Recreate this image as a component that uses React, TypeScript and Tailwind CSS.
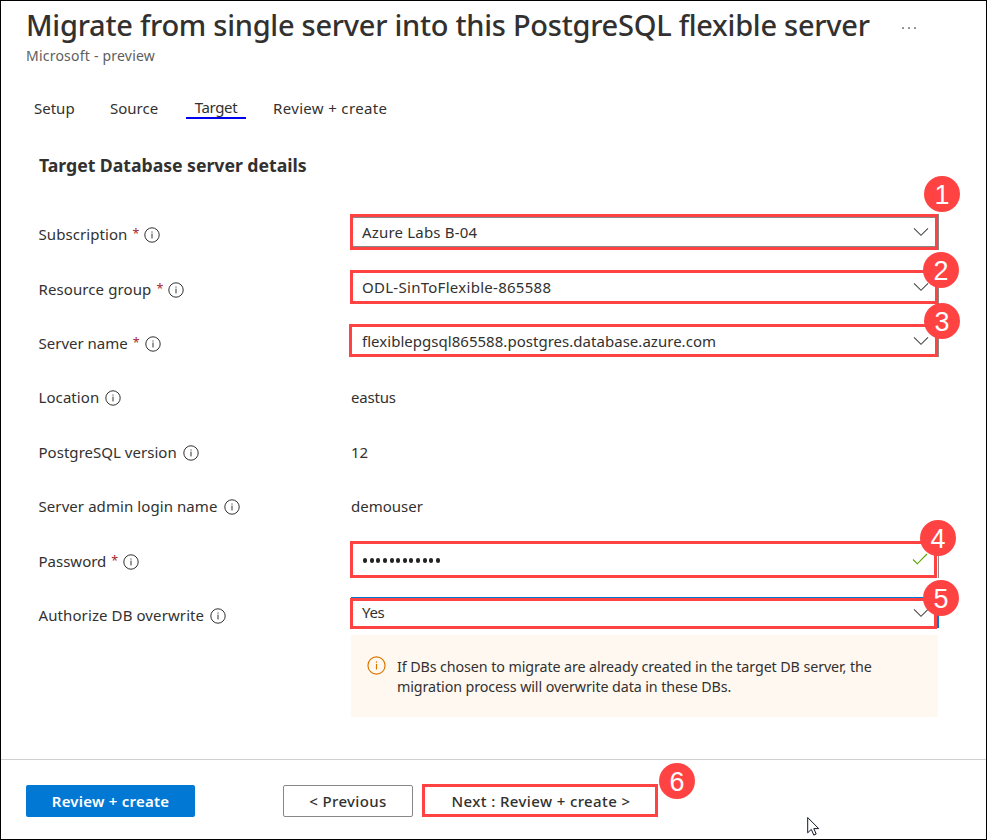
import type { ReactNode } from "react";

function InfoIcon({ className = "size-4" }: { className?: string }) {
  return (
    <svg viewBox="0 0 16 16" className={`shrink-0 ${className}`} fill="none" stroke="currentColor">
      <circle cx="8" cy="8" r="7.2" strokeWidth="1" />
      <path d="M8 6.6V11.4" strokeWidth="1" />
      <path d="M8 4.5V5.6" strokeWidth="1" />
    </svg>
  );
}

function Chevron({ className = "" }: { className?: string }) {
  return (
    <svg viewBox="0 0 16 10" className={`h-2.5 w-4 shrink-0 ${className}`} fill="none" stroke="#4a4948" strokeWidth="1.1">
      <path d="M1 1.3L8 8.3L15 1.3" />
    </svg>
  );
}

function Badge({ n, className }: { n: number; className: string }) {
  return (
    <span
      className={`absolute z-10 flex size-9 items-center justify-center rounded-full bg-[#ff4343] pt-0.5 font-['Liberation_Sans',Arial,sans-serif] text-[27px] leading-none text-white ${className}`}
    >
      {n}
    </span>
  );
}

function Label({ text, required, track = "" }: { text: string; required?: boolean; track?: string }) {
  return (
    <div className="flex h-[54.4px] items-center">
      <span className={track}>{text}</span>
      {required && <span className="ml-[5px] w-1.5 text-[12.5px] text-[#a4262c]">*</span>}
      <InfoIcon className={`mt-0.5 size-4 ${required ? "ml-1.5" : "ml-[6px]"}`} />
    </div>
  );
}

function Field({ className, children }: { className: string; children: ReactNode }) {
  return (
    <div className={`relative flex items-center justify-between border-3 border-[#ff4343] bg-white ${className}`}>
      {children}
    </div>
  );
}

export default function App() {
  return (
    <div className="relative flex h-[840px] w-[987px] flex-col overflow-hidden border border-black bg-white font-['Noto_Sans','Open_Sans',sans-serif] text-[15px] leading-[22px] text-[#323130]">
      <header className="h-[81px] pl-[25px]">
        <div className="flex h-[45px] items-center pt-0.5">
          <h1 className="w-[844px] text-[29px] leading-10 font-medium tracking-[-0.265px] whitespace-nowrap">
            Migrate from single server into this PostgreSQL flexible server
          </h1>
          <svg viewBox="0 0 14 2" className="mt-1.5 ml-8 h-0.5 w-3.5" fill="#323130">
            <circle cx="1" cy="1" r=".85" />
            <circle cx="7" cy="1" r=".85" />
            <circle cx="13" cy="1" r=".85" />
          </svg>
        </div>
        <p className="text-[14px] leading-5 tracking-[0.22px] text-[#605e5c]">Microsoft - preview</p>
      </header>

      <nav className="flex h-[55px] items-start pt-[15px] pl-[33px]">
        <span className="w-[76px]">Setup</span>
        <span className="w-[76px]">Source</span>
        <span className="-mt-px h-[23px] w-[60px] border-b-2 border-[#0000f0] text-center tracking-[-0.35px]">Target</span>
        <span className="ml-[27px] tracking-[0.34px]">Review + create</span>
      </nav>

      <main className="h-[622px] pl-[38px]">
        <h2 className="h-[70px] pt-4 text-[17.7px] leading-6 font-bold tracking-[-0.04px]">Target Database server details</h2>
        <div className="flex">
          <div className="-ml-[0.5px] w-[311.5px]">
            <Label text="Subscription" required track="tracking-[0.07px]" />
            <Label text="Resource group" required track="tracking-[0.1px]" />
            <Label text="Server name" required />
            <Label text="Location" track="tracking-[0.08px]" />
            <Label text="PostgreSQL version" track="tracking-[0.03px]" />
            <Label text="Server admin login name" track="tracking-[0.08px]" />
            <Label text="Password" required />
            <Label text="Authorize DB overwrite" track="tracking-[0.1px]" />
          </div>
          <div className="flex w-[590px] flex-col">
            <Field className="mt-[7px] h-9 w-[588px] shadow-[1px_0_0_#8a8886]">
              <div className="flex h-full w-full items-center justify-between border-y border-[#8a8886] pr-1.5 pl-[9px]">
                <span className="tracking-[0.18px]">Azure Labs B-04</span>
                <Chevron />
              </div>
              <Badge n={1} className="-top-[41px] -right-[25px]" />
            </Field>
            <Field className="mt-5 h-[34px] w-[588px] pr-1.5 pl-[9px] shadow-[1px_0_0_#8a8886]">
              <span className="tracking-[0.28px]">ODL-SinToFlexible-865588</span>
              <Chevron />
              <Badge n={2} className="-top-[21px] -right-6" />
            </Field>
            <Field className="mt-5 -ml-px h-[33px] w-[589px] pr-1.5 pl-2.5 shadow-[1px_0_0_#8a8886]">
              <span className="tracking-[0.03px]">flexiblepgsql865588.postgres.database.azure.com</span>
              <Chevron />
              <Badge n={3} className="-top-6 -right-[25px]" />
            </Field>
            <span className="mt-[29px] ml-px tracking-[-0.2px]">eastus</span>
            <span className="mt-[33px] ml-px">12</span>
            <span className="mt-8 ml-px">demouser</span>
            <Field className="mt-6 h-[37px] w-[587px] pr-1.5 pl-2.5 shadow-[1px_0_0_#ffffff,2px_0_0_#8a8886]">
              <div className="mt-0.5 flex gap-[2.65px]">
                {Array.from({ length: 12 }, (_, i) => (
                  <i key={i} className="h-[4.5px] w-1 rounded-full bg-[#252423]" />
                ))}
              </div>
              <svg viewBox="0 0 16 12" className="mb-0.5 h-3 w-4" fill="none" stroke="#57a300" strokeWidth="1.1">
                <path d="M1 6.5L5.3 10.8L15 1" />
              </svg>
              <Badge n={4} className="-top-6 -right-[22px]" />
            </Field>
            <Field className="mt-5 h-[31px] w-[587px] pr-[5px] pl-[9px] shadow-[1px_-1px_0_#0078d4,2px_-1px_0_#0078d4]">
              <span className="-mt-[3px] tracking-[-0.35px]">Yes</span>
              <Chevron className="mb-0.5" />
              <Badge n={5} className="-top-[21px] -right-[25px]" />
            </Field>
            <div className="mt-1.5 ml-px flex h-[82px] w-[587px] bg-[#fff8f1] pt-[21px] pl-4">
              <InfoIcon className="size-[19px] text-[#db7500]" />
              <p className="mt-px ml-[11px] text-[14.3px] leading-5 tracking-[-0.1px] whitespace-nowrap">
                If DBs chosen to migrate are already created in the target DB server, the
                <br />
                migration process will overwrite data in these DBs.
              </p>
            </div>
          </div>
        </div>
      </main>

      <footer className="flex h-[79px] items-start border-t border-[#d2d0ce] pt-6 pl-[25px] font-semibold">
        <button className="mt-px h-8 w-[169px] rounded-[2px] bg-[#0078d4] tracking-[0.23px] text-white">Review + create</button>
        <button className="mt-px ml-[88px] h-8 w-[130px] rounded-[2px] border border-[#8a8886] font-medium tracking-[0.35px]">
          &lt; Previous
        </button>
        <button className="relative ml-[9px] h-[33px] w-[236px] border-3 border-[#ff4343] pl-0.5 font-medium tracking-[0.38px]">
          Next : Review + create &gt;
          <Badge n={6} className="-top-6 -right-10 font-normal tracking-normal" />
        </button>
        <svg viewBox="0 0 13 20" className="mt-[33px] ml-[149px] h-5 w-[13px] overflow-visible" fill="white" stroke="#111827" strokeWidth="1">
          <path d="M.7 .5V15.8L4.3 12.4L6.8 18.1L9.2 17L6.8 11.6H11.7Z" />
        </svg>
      </footer>
    </div>
  );
}
